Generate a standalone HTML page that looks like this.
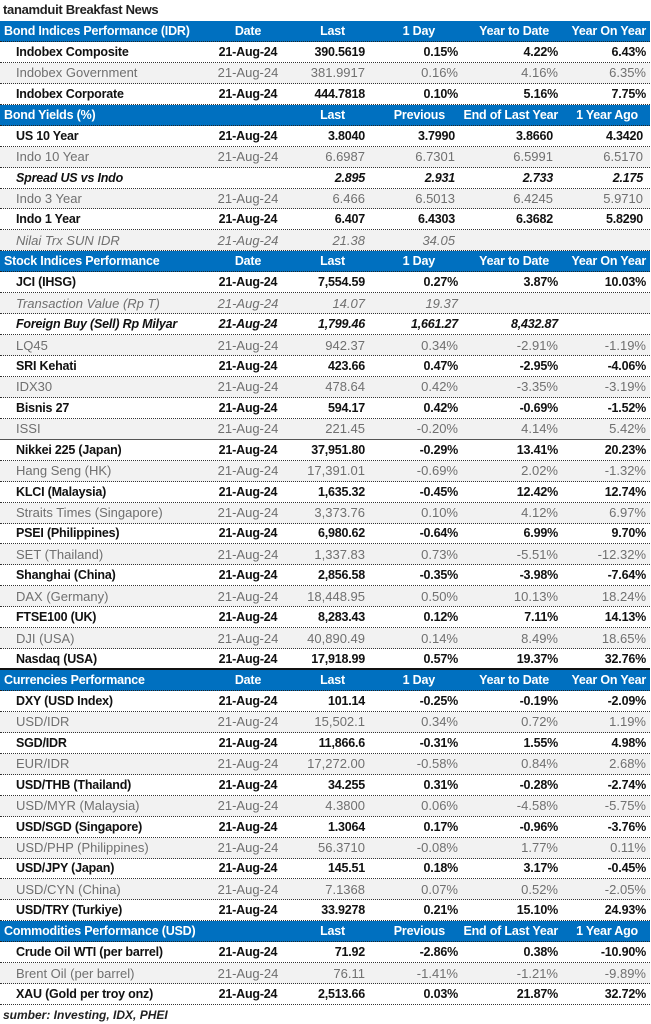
<!DOCTYPE html>
<html><head><meta charset="utf-8"><style>
*{margin:0;padding:0;box-sizing:border-box}
body{width:651px;height:1024px;background:#fff;font-family:"Liberation Sans",Arial,sans-serif;overflow:hidden;position:relative}
.t{position:absolute;left:3px;top:2px;font-weight:bold;font-size:13px;color:#222;letter-spacing:-0.3px}
.tbl{position:absolute;left:0;top:21px;width:650px}
.r{height:20.94px;display:grid;grid-template-columns:215px 66px 84px 93px 100px 88px;align-items:center;font-size:12px;border-bottom:1px dotted #333;white-space:nowrap}
.r>div{text-align:right}
.r>div:first-child{text-align:left;padding-left:16px}
.r>div:nth-child(2){text-align:center}
.b{font-weight:bold;color:#111;background:#fff;letter-spacing:-0.2px;font-size:12.5px}
.g{color:#707070;background:#f2f2f2;font-size:13px}
.i{font-style:italic}
.h{background:#0070c0;color:#fff;font-weight:bold;font-size:12.5px;border-bottom:1px dotted #222;letter-spacing:-0.2px}
.h>div:first-child{padding-left:4px!important}
.h .l{padding-right:20px}.h .d{padding-right:23px}.h .y{padding-right:9px}
.h .p{padding-right:13px}.h .a{padding-right:8px}
.by>div:nth-child(4){padding-right:3px}.by>div:nth-child(5){padding-right:5px}.by>div:nth-child(6){padding-right:3px}
.sl{border-bottom:1.5px solid #555}
.tk{border-bottom:2px solid #111}
.src{position:absolute;left:3px;top:1008px;font-size:12px;font-weight:bold;font-style:italic;color:#222}
</style></head><body>
<div class="t">tanamduit Breakfast News</div>
<div class="tbl">
<div class="r h"><div>Bond Indices Performance (IDR)</div><div>Date</div><div class="l">Last</div><div class="d">1 Day</div><div class="y">Year to Date</div><div>Year On Year</div></div>
<div class="r b"><div>Indobex Composite</div><div>21-Aug-24</div><div>390.5619</div><div>0.15%</div><div>4.22%</div><div>6.43%</div></div>
<div class="r g"><div>Indobex Government</div><div>21-Aug-24</div><div>381.9917</div><div>0.16%</div><div>4.16%</div><div>6.35%</div></div>
<div class="r b"><div>Indobex Corporate</div><div>21-Aug-24</div><div>444.7818</div><div>0.10%</div><div>5.16%</div><div>7.75%</div></div>
<div class="r h"><div>Bond Yields (%)</div><div></div><div class="l">Last</div><div class="p">Previous</div><div>End of Last Year</div><div class="a">1 Year Ago</div></div>
<div class="r b by"><div>US 10 Year</div><div>21-Aug-24</div><div>3.8040</div><div>3.7990</div><div>3.8660</div><div>4.3420</div></div>
<div class="r g by"><div>Indo 10 Year</div><div>21-Aug-24</div><div>6.6987</div><div>6.7301</div><div>6.5991</div><div>6.5170</div></div>
<div class="r b i by"><div>Spread US vs Indo</div><div></div><div>2.895</div><div>2.931</div><div>2.733</div><div>2.175</div></div>
<div class="r g by"><div>Indo 3 Year</div><div>21-Aug-24</div><div>6.466</div><div>6.5013</div><div>6.4245</div><div>5.9710</div></div>
<div class="r b by"><div>Indo 1 Year</div><div>21-Aug-24</div><div>6.407</div><div>6.4303</div><div>6.3682</div><div>5.8290</div></div>
<div class="r g i by"><div>Nilai Trx SUN IDR</div><div>21-Aug-24</div><div>21.38</div><div>34.05</div><div></div><div></div></div>
<div class="r h"><div>Stock Indices Performance</div><div>Date</div><div class="l">Last</div><div class="d">1 Day</div><div class="y">Year to Date</div><div>Year On Year</div></div>
<div class="r b"><div>JCI (IHSG)</div><div>21-Aug-24</div><div>7,554.59</div><div>0.27%</div><div>3.87%</div><div>10.03%</div></div>
<div class="r g i"><div>Transaction Value (Rp T)</div><div>21-Aug-24</div><div>14.07</div><div>19.37</div><div></div><div></div></div>
<div class="r b i"><div>Foreign Buy (Sell) Rp Milyar</div><div>21-Aug-24</div><div>1,799.46</div><div>1,661.27</div><div>8,432.87</div><div></div></div>
<div class="r g"><div>LQ45</div><div>21-Aug-24</div><div>942.37</div><div>0.34%</div><div>-2.91%</div><div>-1.19%</div></div>
<div class="r b"><div>SRI Kehati</div><div>21-Aug-24</div><div>423.66</div><div>0.47%</div><div>-2.95%</div><div>-4.06%</div></div>
<div class="r g"><div>IDX30</div><div>21-Aug-24</div><div>478.64</div><div>0.42%</div><div>-3.35%</div><div>-3.19%</div></div>
<div class="r b"><div>Bisnis 27</div><div>21-Aug-24</div><div>594.17</div><div>0.42%</div><div>-0.69%</div><div>-1.52%</div></div>
<div class="r g sl"><div>ISSI</div><div>21-Aug-24</div><div>221.45</div><div>-0.20%</div><div>4.14%</div><div>5.42%</div></div>
<div class="r b"><div>Nikkei 225 (Japan)</div><div>21-Aug-24</div><div>37,951.80</div><div>-0.29%</div><div>13.41%</div><div>20.23%</div></div>
<div class="r g"><div>Hang Seng (HK)</div><div>21-Aug-24</div><div>17,391.01</div><div>-0.69%</div><div>2.02%</div><div>-1.32%</div></div>
<div class="r b"><div>KLCI (Malaysia)</div><div>21-Aug-24</div><div>1,635.32</div><div>-0.45%</div><div>12.42%</div><div>12.74%</div></div>
<div class="r g"><div>Straits Times (Singapore)</div><div>21-Aug-24</div><div>3,373.76</div><div>0.10%</div><div>4.12%</div><div>6.97%</div></div>
<div class="r b"><div>PSEI (Philippines)</div><div>21-Aug-24</div><div>6,980.62</div><div>-0.64%</div><div>6.99%</div><div>9.70%</div></div>
<div class="r g"><div>SET (Thailand)</div><div>21-Aug-24</div><div>1,337.83</div><div>0.73%</div><div>-5.51%</div><div>-12.32%</div></div>
<div class="r b"><div>Shanghai (China)</div><div>21-Aug-24</div><div>2,856.58</div><div>-0.35%</div><div>-3.98%</div><div>-7.64%</div></div>
<div class="r g"><div>DAX (Germany)</div><div>21-Aug-24</div><div>18,448.95</div><div>0.50%</div><div>10.13%</div><div>18.24%</div></div>
<div class="r b"><div>FTSE100 (UK)</div><div>21-Aug-24</div><div>8,283.43</div><div>0.12%</div><div>7.11%</div><div>14.13%</div></div>
<div class="r g"><div>DJI (USA)</div><div>21-Aug-24</div><div>40,890.49</div><div>0.14%</div><div>8.49%</div><div>18.65%</div></div>
<div class="r b tk"><div>Nasdaq (USA)</div><div>21-Aug-24</div><div>17,918.99</div><div>0.57%</div><div>19.37%</div><div>32.76%</div></div>
<div class="r h"><div>Currencies Performance</div><div>Date</div><div class="l">Last</div><div class="d">1 Day</div><div class="y">Year to Date</div><div>Year On Year</div></div>
<div class="r b"><div>DXY (USD Index)</div><div>21-Aug-24</div><div>101.14</div><div>-0.25%</div><div>-0.19%</div><div>-2.09%</div></div>
<div class="r g"><div>USD/IDR</div><div>21-Aug-24</div><div>15,502.1</div><div>0.34%</div><div>0.72%</div><div>1.19%</div></div>
<div class="r b"><div>SGD/IDR</div><div>21-Aug-24</div><div>11,866.6</div><div>-0.31%</div><div>1.55%</div><div>4.98%</div></div>
<div class="r g"><div>EUR/IDR</div><div>21-Aug-24</div><div>17,272.00</div><div>-0.58%</div><div>0.84%</div><div>2.68%</div></div>
<div class="r b"><div>USD/THB (Thailand)</div><div>21-Aug-24</div><div>34.255</div><div>0.31%</div><div>-0.28%</div><div>-2.74%</div></div>
<div class="r g"><div>USD/MYR (Malaysia)</div><div>21-Aug-24</div><div>4.3800</div><div>0.06%</div><div>-4.58%</div><div>-5.75%</div></div>
<div class="r b"><div>USD/SGD (Singapore)</div><div>21-Aug-24</div><div>1.3064</div><div>0.17%</div><div>-0.96%</div><div>-3.76%</div></div>
<div class="r g"><div>USD/PHP (Philippines)</div><div>21-Aug-24</div><div>56.3710</div><div>-0.08%</div><div>1.77%</div><div>0.11%</div></div>
<div class="r b"><div>USD/JPY (Japan)</div><div>21-Aug-24</div><div>145.51</div><div>0.18%</div><div>3.17%</div><div>-0.45%</div></div>
<div class="r g"><div>USD/CYN (China)</div><div>21-Aug-24</div><div>7.1368</div><div>0.07%</div><div>0.52%</div><div>-2.05%</div></div>
<div class="r b"><div>USD/TRY (Turkiye)</div><div>21-Aug-24</div><div>33.9278</div><div>0.21%</div><div>15.10%</div><div>24.93%</div></div>
<div class="r h"><div>Commodities Performance (USD)</div><div></div><div class="l">Last</div><div class="p">Previous</div><div>End of Last Year</div><div class="a">1 Year Ago</div></div>
<div class="r b"><div>Crude Oil WTI (per barrel)</div><div>21-Aug-24</div><div>71.92</div><div>-2.86%</div><div>0.38%</div><div>-10.90%</div></div>
<div class="r g"><div>Brent Oil (per barrel)</div><div>21-Aug-24</div><div>76.11</div><div>-1.41%</div><div>-1.21%</div><div>-9.89%</div></div>
<div class="r b"><div>XAU (Gold per troy onz)</div><div>21-Aug-24</div><div>2,513.66</div><div>0.03%</div><div>21.87%</div><div>32.72%</div></div>
</div>
<div class="src">sumber: Investing, IDX, PHEI</div>
</body></html>
